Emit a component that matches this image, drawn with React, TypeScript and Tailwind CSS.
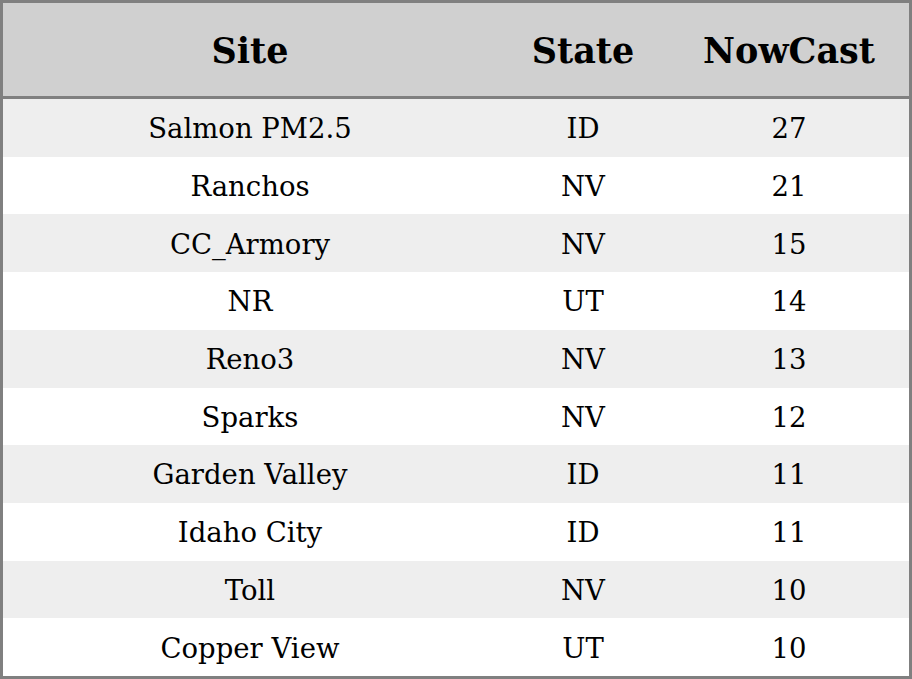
const rows = [
  { site: "Salmon PM2.5", state: "ID", nowcast: 27 },
  { site: "Ranchos", state: "NV", nowcast: 21 },
  { site: "CC_Armory", state: "NV", nowcast: 15 },
  { site: "NR", state: "UT", nowcast: 14 },
  { site: "Reno3", state: "NV", nowcast: 13 },
  { site: "Sparks", state: "NV", nowcast: 12 },
  { site: "Garden Valley", state: "ID", nowcast: 11 },
  { site: "Idaho City", state: "ID", nowcast: 11 },
  { site: "Toll", state: "NV", nowcast: 10 },
  { site: "Copper View", state: "UT", nowcast: 10 },
];

export default function App() {
  return (
    <div className="w-[912px] h-[679px] bg-white font-['DejaVu_Serif',serif] text-black">
      <div className="border-[3px] border-[#808080] h-full flex flex-col">
        <div className="grid grid-cols-[494px_172px_1fr] h-[96px] shrink-0 items-center pt-[3px] bg-[#d0d0d0] border-b-[3px] border-[#808080] text-[35px] font-bold">
          <div className="text-center">Site</div>
          <div className="text-center">State</div>
          <div className="text-center">NowCast</div>
        </div>
        {rows.map((r, i) => (
          <div
            key={r.site}
            className={
              "grid grid-cols-[494px_172px_1fr] flex-1 items-center pt-[2px] text-[27.5px] " +
              (i % 2 === 0 ? "bg-[#eeeeee]" : "bg-white")
            }
          >
            <div className="text-center">{r.site}</div>
            <div className="text-center">{r.state}</div>
            <div className="text-center">{r.nowcast}</div>
          </div>
        ))}
      </div>
    </div>
  );
}
